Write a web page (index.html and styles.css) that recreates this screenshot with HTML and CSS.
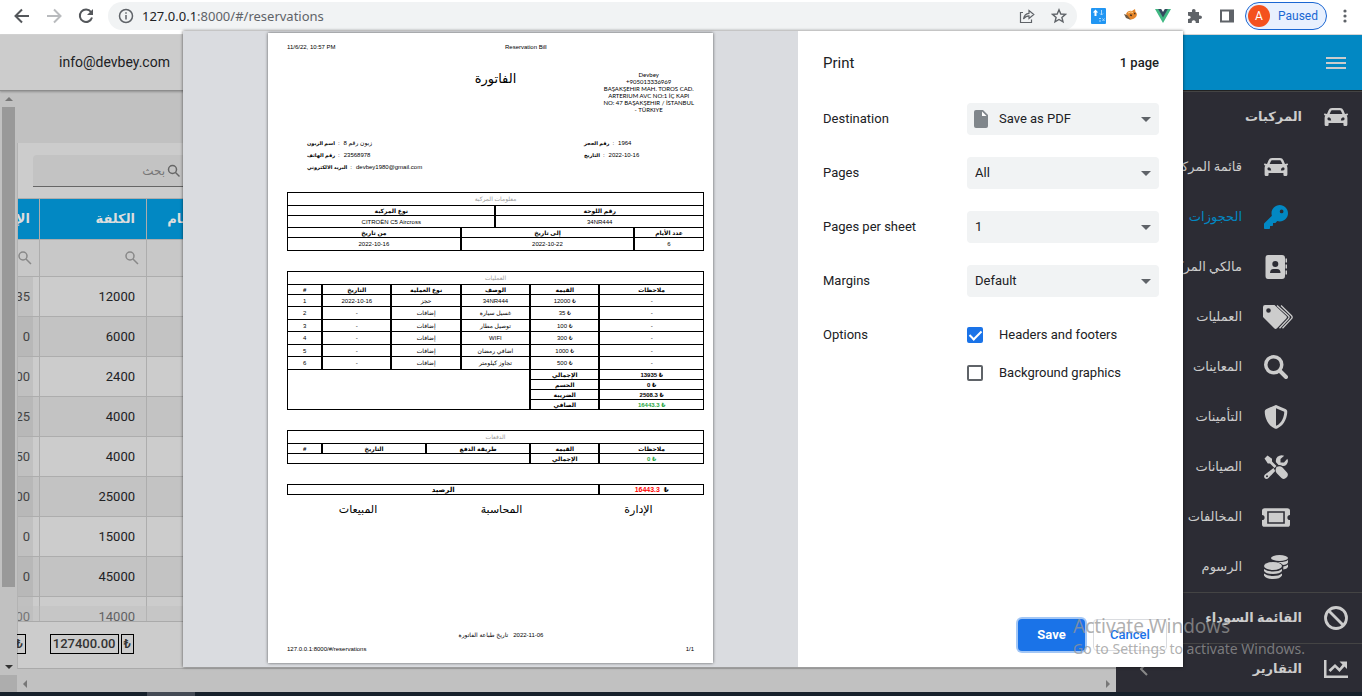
FILE: index.html
```html
<!DOCTYPE html>
<html lang="ar">
<head>
<meta charset="utf-8">
<meta name="viewport" content="width=device-width, initial-scale=1">
<title>Reservations</title>
<link rel="stylesheet" href="styles.css">
</head>
<body>
<header class="toolbar">
  <nav class="nav-buttons" aria-label="Browser">
    <button class="tool" aria-label="Back"><svg width="16" height="16" viewBox="0 0 16 16" fill="none" stroke="#54575b" stroke-width="2"><path d="M15 8H2M8 1.5L1.5 8L8 14.500"/></svg></button>
    <button class="tool" aria-label="Forward"><svg width="16" height="16" viewBox="0 0 16 16" fill="none" stroke="#b9bbbe" stroke-width="2"><path d="M1 8H14M8 1.500L14.500 8L8 14.500"/></svg></button>
    <button class="tool" aria-label="Reload"><svg width="16" height="16" viewBox="0 0 16 16"><path d="M13 4A6.200 6.200 0 1 0 14 9.500" fill="none" stroke="#54575b" stroke-width="2"/><path d="M15 1V7H9Z" fill="#54575b"/></svg></button>
  </nav>
  <div class="omnibox">
    <svg width="16" height="16" viewBox="0 0 16 16" fill="none" stroke="#5f6368" stroke-width="1.500"><circle cx="8" cy="8" r="6.500"/><path d="M8 7V11.500M8 4.200V5.800"/></svg>
    <span class="url"><span class="host">127.0.0.1</span>:8000/#/reservations</span>
    <button class="tool" aria-label="Share"><svg width="16" height="16" viewBox="0 0 16 16" fill="none" stroke="#5f6368" stroke-width="1.200"><path d="M4 4.500H1.500V14.500H12.500V11.500M4.500 11C5 7.500 7 5.500 10 5.300V2.500L14.800 6.500L10 10.500V7.900C7.500 7.900 6 9 4.500 11Z"/></svg></button>
    <button class="tool" aria-label="Bookmark"><svg width="16" height="16" viewBox="0 0 16 16" fill="none" stroke="#5f6368" stroke-width="1.400"><path d="M8 1.800L9.800 6L14.400 6.400L10.900 9.400L12 13.900L8 11.500L4 13.900L5.100 9.400L1.600 6.400L6.200 6Z"/></svg></button>
  </div>
  <div class="extensions">
    <svg width="16" height="16" viewBox="0 0 16 16"><rect width="15" height="16" rx="1" fill="#2196f3"/><path d="M3.500 8V4.500H1.800L4.500 1.500L7.200 4.500H5.500V8Z" fill="#fff"/><path d="M10.500 2V7M9 5.500L10.500 7L12 5.500M8 10.500H10M8 13H10M11.500 10.500L13.500 13M13.500 10.500L11.500 13" stroke="#a8d6fb" fill="none"/></svg>
    <svg width="16" height="16" viewBox="0 0 16 16"><path d="M3 6Q5 2 9 3L12 1L12.500 4Q15 6 13 9Q10 12.500 6 11Z" fill="#e5862b"/><path d="M1 6L4 7L8 12L3 10Z" fill="#6d5a45"/><path d="M7 7L9 7.500M11 5.500L12.500 5.500" stroke="#4b3522" stroke-width="1.500"/><path d="M5 5Q8 3 10 4.500" stroke="#ffd28b" fill="none"/></svg>
    <svg width="16" height="16" viewBox="0 0 16 16"><path d="M0 1H4L8 8L12 1H16L8 15Z" fill="#41b883"/><path d="M3.200 1H6.200L8 4L9.800 1H12.800L8 9.500Z" fill="#35495e"/></svg>
    <svg width="16" height="16" viewBox="0 0 16 16" fill="#5f6368"><path d="M1 4H5Q4.500 1 6.700 1Q9 1 8.500 4H12V7.500Q15 7 15 9.300Q15 11.500 12 11V15H8.700Q9 12.300 6.700 12.300Q4.500 12.300 4.700 15H1V11Q3.800 11 3.800 9.200Q3.800 7.500 1 7.700Z"/></svg>
    <svg width="16" height="16" viewBox="0 0 16 16"><rect x="1" y="1.500" width="14" height="13" fill="#5f6368"/><rect x="3" y="3.500" width="7" height="9" fill="#fff"/></svg>
    <button class="profile"><span class="avatar">A</span>Paused</button>
    <button class="tool" aria-label="Menu"><svg width="16" height="16" viewBox="0 0 16 16" fill="#5f6368"><circle cx="8" cy="3" r="1.600"/><circle cx="8" cy="8" r="1.600"/><circle cx="8" cy="13" r="1.600"/></svg></button>
  </div>
</header>

<div class="app">
  <main class="main">
    <div class="app-header">info@devbey.com</div>
    <div class="work">
      <div class="vscroll"><span class="arrow up"></span><span class="thumb"></span><span class="arrow down"></span></div>
      <section class="content">
        <div class="card">
          <label class="search"><input type="text" placeholder="بحث" dir="rtl" aria-label="بحث"><svg width="14" height="14" viewBox="0 0 14 14" fill="none" stroke="#666" stroke-width="1.500"><circle cx="5.500" cy="5.500" r="4"/><path d="M8.500 8.500L12.500 12.500"/></svg></label>
          <div class="grid-scroll">
            <table class="grid">
              <colgroup><col class="c-total"><col class="c-cost"><col class="c-days"><col></colgroup>
              <thead>
                <tr><th>الإجمالي</th><th>الكلفة</th><th>عدد الأيام</th><th></th></tr>
                <tr class="filters"><td><svg width="14" height="14" viewBox="0 0 14 14"><circle cx="5" cy="5" r="4"/><path d="M8 8L13 13"/></svg></td><td><svg width="14" height="14" viewBox="0 0 14 14"><circle cx="5" cy="5" r="4"/><path d="M8 8L13 13"/></svg></td><td></td><td></td></tr>
              </thead>
              <tbody>
                <tr><td>935</td><td>12000</td><td></td><td></td></tr>
                <tr><td>0</td><td>6000</td><td></td><td></td></tr>
                <tr><td>400</td><td>2400</td><td></td><td></td></tr>
                <tr><td>025</td><td>4000</td><td></td><td></td></tr>
                <tr><td>050</td><td>4000</td><td></td><td></td></tr>
                <tr><td>500</td><td>25000</td><td></td><td></td></tr>
                <tr><td>0</td><td>15000</td><td></td><td></td></tr>
                <tr><td>0</td><td>45000</td><td></td><td></td></tr>
                <tr><td>000</td><td>14000</td><td></td><td></td></tr>
              </tbody>
            </table>
            <div class="inner-scroll"></div>
          </div>
          <div class="totals"><div class="total-a"><b>₺</b></div><div class="total-b"><b>127400.00</b><b>₺</b></div></div>
        </div>
      </section>
    </div>
    <div class="hscroll"><span class="corner"></span><span class="arrow left"></span><span class="arrow right"></span></div>
  </main>

  <aside class="sidebar">
    <div class="side-top"><button class="burger" aria-label="القائمة"><svg width="20" height="14" viewBox="0 0 20 14" fill="#ccc"><path d="M0 1H20V3H0ZM0 6H20V8H0ZM0 11H20V13H0Z"/></svg></button></div>
    <nav class="side-nav" dir="rtl">
      <a class="item top" href="#"><svg class="ico" viewBox="0 0 24 18"><path fill-rule="evenodd" d="M3 6L4.600 2.200Q5.500 0 8 0H16Q18.500 0 19.400 2.200L21 6L23.300 5.600Q24 5.600 24 6.500Q24 7.300 22.700 7.500Q23.400 8.500 23.400 10V16.500Q23.400 18 22 18H20.600Q19.400 18 19.400 16.500V15H4.600V16.500Q4.600 18 3.400 18H2Q.6 18 .6 16.500V10Q.6 8.500 1.300 7.500Q0 7.300 0 6.500Q0 5.600 .7 5.600ZM5.600 6H18.400L17 2.900Q16.700 2.300 16 2.300H8Q7.300 2.300 7 2.900ZM5 9.200A1.600 1.600 0 1 0 5 12.400H7.200Q7 9.800 5 9.200ZM19 9.200A1.600 1.600 0 1 1 19 12.400H16.800Q17 9.800 19 9.200Z"/></svg><span>المركبات</span></a>
      <a class="item" href="#"><svg class="ico" viewBox="0 0 24 18"><path fill-rule="evenodd" d="M3 6L4.600 2.200Q5.500 0 8 0H16Q18.500 0 19.400 2.200L21 6L23.300 5.600Q24 5.600 24 6.500Q24 7.300 22.700 7.500Q23.400 8.500 23.400 10V16.500Q23.400 18 22 18H20.600Q19.400 18 19.400 16.500V15H4.600V16.500Q4.600 18 3.400 18H2Q.6 18 .6 16.500V10Q.6 8.500 1.300 7.500Q0 7.300 0 6.500Q0 5.600 .7 5.600ZM5.600 6H18.400L17 2.900Q16.700 2.300 16 2.300H8Q7.300 2.300 7 2.900ZM5 9.200A1.600 1.600 0 1 0 5 12.400H7.200Q7 9.800 5 9.200ZM19 9.200A1.600 1.600 0 1 1 19 12.400H16.800Q17 9.800 19 9.200Z"/></svg><span>قائمة المركبات</span></a>
      <a class="item active" href="#"><svg class="ico" viewBox="0 0 512 512"><path d="M336 352c97.200 0 176-78.800 176-176S433.200 0 336 0S160 78.800 160 176c0 18.700 2.900 36.800 8.300 53.700L7 391c-4.500 4.500-7 10.600-7 17v80c0 13.300 10.700 24 24 24h80c13.300 0 24-10.700 24-24V448h40c13.300 0 24-10.700 24-24V384h40c6.400 0 12.500-2.500 17-7l33.300-33.300c16.900 5.400 35 8.300 53.700 8.300zM376 96a40 40 0 1 1 0 80 40 40 0 1 1 0-80z"/></svg><span>الحجوزات</span></a>
      <a class="item" href="#"><svg class="ico" viewBox="0 0 24 24"><path fill-rule="evenodd" d="M4 0H18Q21 0 21 3V21Q21 24 18 24H4Q1.500 24 1.500 21V3Q1.500 0 4 0ZM11.300 6A3 3 0 1 0 11.300 12A3 3 0 1 0 11.300 6ZM6 18H16.500Q16.500 14 13 14H9.500Q6 14 6 18Z"/><path d="M21.500 3.500H23V7.500H21.500ZM21.500 9.500H23V13.500H21.500ZM21.500 15.500H23V19.500H21.500Z"/></svg><span>مالكي المركبات</span></a>
      <a class="item" href="#"><svg class="ico wide" viewBox="0 0 30 24"><path fill-rule="evenodd" d="M0 2Q0 0 2 0H11.500L23.300 11Q24.500 12.200 23.300 13.400L14 23.300Q12.500 24.500 11.200 23.300L0 12ZM5.500 3.200A2.300 2.300 0 1 0 5.500 7.800A2.300 2.300 0 1 0 5.500 3.200Z"/><path d="M14 .5L25.500 11Q26.700 12.300 25.500 13.600L16.500 23.300M18 .5L28.500 10.800Q29.800 12.200 28.500 13.600L19.500 23.300" fill="none" stroke="currentColor" stroke-width="1.300"/></svg><span>العمليات</span></a>
      <a class="item" href="#"><svg class="ico" viewBox="0 0 24 24" fill="none" stroke="currentColor"><circle cx="9.750" cy="9.750" r="8" stroke-width="3.500"/><path d="M16 16L22 22" stroke-width="4" stroke-linecap="round"/></svg><span>المعاينات</span></a>
      <a class="item" href="#"><svg class="ico" viewBox="0 0 512 512"><path d="M256 0c4.600 0 9.200 1 13.400 2.900L457.700 82.800c22 9.300 38.400 31 38.300 57.200c-.5 99.200-41.300 280.700-213.600 363.200c-16.700 8-36.100 8-52.800 0C57.300 420.700 16.500 239.200 16 140c-.1-26.200 16.300-47.900 38.300-57.200L242.700 2.900C246.800 1 251.400 0 256 0zm0 66.800V444.800C394 378 431.100 230.100 432 141.400L256 66.800z"/></svg><span>التأمينات</span></a>
      <a class="item" href="#"><svg class="ico" viewBox="0 0 24 24"><path d="M.5 3.500L3.500 .5L8 3.800V6.500L12.500 11L10.500 13L6 8.500H3.800ZM12.500 12Q16 10.500 18.500 12.500L23 17.500Q25 20 22.500 22.500Q20 25 17.500 23L13 18.500Q10.500 16 12.500 12Z"/><path fill-rule="evenodd" d="M23.300 3.800L20 7.500H16.500V4L20.200 .7Q16.500 -.8 13.500 1.800Q11.300 4 12 7.300L14.500 10Q16.500 9.500 18.500 11Q21 11.300 22.800 9.200Q24.800 6.500 23.300 3.800ZM9.500 13L1 19.500Q-.8 21.500 .8 23.200Q2.500 24.800 4.500 23L11.200 16ZM3 20.300A1 1 0 1 0 3 22.300A1 1 0 1 0 3 20.300Z"/></svg><span>الصيانات</span></a>
      <a class="item" href="#"><svg class="ico ticket" viewBox="0 0 27 18"><path fill-rule="evenodd" d="M2.500 0H24.500Q27 0 27 2.500V6.500A2.500 2.500 0 0 0 27 11.500V15.500Q27 18 24.500 18H2.500Q0 18 0 15.500V11.500A2.500 2.500 0 0 0 0 6.500V2.500Q0 0 2.500 0ZM5 3V15H22V3ZM6.500 4.500H20.500V13.500H6.500Z"/></svg><span>المخالفات</span></a>
      <a class="item" href="#"><svg class="ico" viewBox="0 0 24 24"><ellipse cx="15.500" cy="3" rx="8.500" ry="3"/><ellipse cx="9" cy="11" rx="9" ry="4"/><path d="M24 5V7.500Q23 9.500 19 10Q17 7.500 13 7Q21 7.500 24 5ZM24 9.500V12Q23 14 19.300 14.500V11.500Q22.500 11 24 9.500ZM0 14Q3 16.500 9 16.500T18 14V16Q16 19 9 19T0 16ZM0 18.500Q3 21 9 21T18 18.500V20.500Q16 24 9 24T0 20.500Z"/></svg><span>الرسوم</span></a>
      <a class="item top ruled" href="#"><svg class="ico" viewBox="0 0 24 24" fill="none" stroke="currentColor" stroke-width="2.800"><circle cx="12" cy="12" r="10.500"/><path d="M4.500 4.500L19.500 19.500"/></svg><span>القائمة السوداء</span></a>
      <a class="item top ruled" href="#"><svg class="ico" viewBox="0 0 24 18"><path d="M0 0H2.500V15.500H24V18H0ZM15.500 1.500H23V9L20.500 6.500L15.500 12L11 7.500L6.500 12L4.500 10L11 4L15.500 8.300L18.500 4.500Z"/></svg><span>التقارير</span><svg class="chev" width="8" height="14" viewBox="0 0 8 14" fill="none" stroke="#888" stroke-width="2"><path d="M7 1L1 7L7 13"/></svg></a>
    </nav>
  </aside>
</div>
<footer class="taskbar"><span class="task"></span></footer>

<div class="dialog-layer">
  <section class="dialog" role="dialog" aria-label="Print">
    <div class="preview">
      <article class="sheet">
        <div class="run-head"><span>11/6/22, 10:57 PM</span><span>Reservation Bill</span></div>
        <div class="bill-head">
          <h1>الفاتورة</h1>
          <address>Devbey<br>+905013336969<br>BAŞAKŞEHIR MAH. TOROS CAD.<br>ARTERIUM AVC NO:1 İÇ KAPI<br>NO: 47 BAŞAKŞEHIR / İSTANBUL<br>- TÜRKIYE</address>
        </div>
        <div class="facts">
          <div><p><b>اسم الزبون</b><i>:</i><bdi>زبون رقم 8</bdi></p><p><b>رقم الهاتف</b><i>:</i><bdi>23568978</bdi></p><p><b>البريد الالكتروني</b><i>:</i><bdi>devbey1980@gmail.com</bdi></p></div>
          <div><p><b>رقم الحجز</b><i>:</i><bdi>1964</bdi></p><p><b>التاريخ</b><i>:</i><bdi>2022-10-16</bdi></p></div>
        </div>
        <table class="bill">
          <colgroup><col span="12"></colgroup>
          <tr class="title"><td colspan="12">معلومات المركبة</td></tr>
          <tr class="low"><th colspan="6">نوع المركبة</th><th colspan="6">رقم اللوحة</th></tr>
          <tr><td colspan="6">CITROËN C5 Aircross</td><td colspan="6">34NR444</td></tr>
          <tr class="low"><th colspan="5">من تاريخ</th><th colspan="5">إلى تاريخ</th><th colspan="2">عدد الأيام</th></tr>
          <tr class="tall"><td colspan="5">2022-10-16</td><td colspan="5">2022-10-22</td><td colspan="2">6</td></tr>
        </table>
        <table class="bill">
          <colgroup><col span="12"></colgroup>
          <tr class="title"><td colspan="12">العمليات</td></tr>
          <tr class="low"><th>#</th><th colspan="2">التاريخ</th><th colspan="2">نوع العملية</th><th colspan="2">الوصف</th><th colspan="2">القيمة</th><th colspan="3">ملاحظات</th></tr>
          <tr><td>1</td><td colspan="2">2022-10-16</td><td colspan="2">حجز</td><td colspan="2">34NR444</td><td colspan="2">12000 ₺</td><td colspan="3">-</td></tr>
          <tr><td>2</td><td colspan="2">-</td><td colspan="2">إضافات</td><td colspan="2">غسيل سيارة</td><td colspan="2">35 ₺</td><td colspan="3">-</td></tr>
          <tr><td>3</td><td colspan="2">-</td><td colspan="2">إضافات</td><td colspan="2">توصيل مطار</td><td colspan="2">100 ₺</td><td colspan="3">-</td></tr>
          <tr><td>4</td><td colspan="2">-</td><td colspan="2">إضافات</td><td colspan="2">WIFI</td><td colspan="2">300 ₺</td><td colspan="3">-</td></tr>
          <tr><td>5</td><td colspan="2">-</td><td colspan="2">إضافات</td><td colspan="2">اضافي رمضان</td><td colspan="2">1000 ₺</td><td colspan="3">-</td></tr>
          <tr><td>6</td><td colspan="2">-</td><td colspan="2">إضافات</td><td colspan="2">تجاوز كيلومتر</td><td colspan="2">500 ₺</td><td colspan="3">-</td></tr>
          <tr class="low"><td colspan="7" rowspan="4"></td><th colspan="2">الإجمالي</th><th colspan="3">13935 ₺</th></tr>
          <tr class="low"><th colspan="2">الحسم</th><th colspan="3">0 ₺</th></tr>
          <tr class="low"><th colspan="2">الضريبة</th><th colspan="3">2508.3 ₺</th></tr>
          <tr class="low"><th colspan="2">الصافي</th><th colspan="3" class="green">16443.3 ₺</th></tr>
        </table>
        <table class="bill">
          <colgroup><col span="12"></colgroup>
          <tr class="title"><td colspan="12">الدفعات</td></tr>
          <tr class="low"><th>#</th><th colspan="3">التاريخ</th><th colspan="3">طريقة الدفع</th><th colspan="2">القيمة</th><th colspan="3">ملاحظات</th></tr>
          <tr class="low"><td colspan="7"></td><th colspan="2">الإجمالي</th><th colspan="3" class="green">0 ₺</th></tr>
        </table>
        <table class="bill balance">
          <colgroup><col span="12"></colgroup>
          <tr class="low"><th colspan="9">الرصيد</th><th colspan="3"><span class="red">16443.3</span>&nbsp; ₺</th></tr>
        </table>
        <div class="signs"><span>المبيعات</span><span>المحاسبة</span><span>الإدارة</span></div>
        <div class="printed"><bdi>تاريخ طباعة الفاتورة</bdi><bdi>2022-11-06</bdi></div>
        <div class="run-foot"><span>127.0.0.1:8000/#/reservations</span><span>1/1</span></div>
      </article>
    </div>
    <form class="options">
      <div class="opt-head"><h2>Print</h2><span>1 page</span></div>
      <div class="fields">
        <label for="dest">Destination</label>
        <div class="pick file"><svg width="14" height="18" viewBox="0 0 14 18"><path d="M2 0H9L14 5V16Q14 18 12 18H2Q0 18 0 16V2Q0 0 2 0Z" fill="#80868b"/><path d="M8 1.500V6H12.500Z" fill="#fff"/></svg><select id="dest"><option>Save as PDF</option></select></div>
        <label for="pages">Pages</label>
        <div class="pick"><select id="pages"><option>All</option></select></div>
        <label for="per">Pages per sheet</label>
        <div class="pick"><select id="per"><option>1</option></select></div>
        <label for="margins">Margins</label>
        <div class="pick"><select id="margins"><option>Default</option></select></div>
        <span>Options</span>
        <div class="checks">
          <label><input type="checkbox" checked>Headers and footers</label>
          <label><input type="checkbox">Background graphics</label>
        </div>
      </div>
      <div class="actions"><button type="button" class="btn save">Save</button><button type="button" class="btn cancel">Cancel</button></div>
    </form>
  </section>
</div>
<div class="watermark"><p class="wm-title">Activate Windows</p><p>Go to Settings to activate Windows.</p></div>
</body>
</html>
```
FILE: styles.css
```css
* { box-sizing: border-box; }
html, body { height: 100%; }
body {
  margin: 0;
  display: flex;
  flex-direction: column;
  position: relative;
  overflow: hidden;
  direction: ltr;
  background: #fff;
  font: 13px/20px Roboto, "DejaVu Sans", sans-serif;
  color: #202124;
}
button, input, select { font: inherit; color: inherit; }
button { border: 0; background: none; padding: 0; }
h1, h2, p { margin: 0; font-weight: 400; }
svg { display: block; flex: none; }

/* Browser toolbar */
.toolbar { display: flex; align-items: center; height: 34px; padding: 0 10px 2px 14px; flex: none; }
.nav-buttons { display: flex; gap: 16px; width: 94px; flex: none; }
.omnibox { flex: 1; display: flex; align-items: center; height: 28px; border-radius: 14px; background: #f1f3f4; padding: 0 10px; }
.url { flex: 1; padding-left: 8px; font: 13px/20px "Noto Sans", sans-serif; color: #5f6368; }
.host { color: #202124; }
.omnibox .tool { margin-left: 16px; }
.extensions { display: flex; align-items: center; gap: 16px; padding-left: 14px; }
.profile {
  display: flex; align-items: center; gap: 8px;
  height: 28px; margin: 0 -6px; padding: 0 8px 0 2px;
  border: 1px solid #1a66d2; border-radius: 14px;
  background: #e8f0fe; color: #1967d2; font-size: 12px;
}
.extensions > .tool:last-child { margin-right: -1px; }
.avatar { width: 22px; height: 22px; border-radius: 50%; background: #f4511e; color: #fff; line-height: 22px; }

/* Application */
.app { flex: 1; min-height: 0; display: grid; grid-template-columns: minmax(0, 1fr) 246px; border-top: 1px solid #d5d5d5; }
.main { display: flex; flex-direction: column; min-height: 0; background: #c1c1c1; }
.app-header { height: 56px; flex: none; padding: 17px 0 0 59px; background: #ccc; border-bottom: 1px solid #8d8d8d; font-size: 14px; position: relative; box-shadow: 0 1px 2px rgba(0,0,0,.25); }
.work { flex: 1; min-height: 0; display: flex; }
.vscroll { width: 17px; flex: none; display: flex; flex-direction: column; align-items: center; padding: 6px 0; background: #c1c1c1; }
.thumb { width: 13px; height: 480px; margin: 6px 0 auto; background: #999; }
.arrow { border: 4px solid transparent; width: 0; height: 0; }
.up { border-top: 0; border-bottom-color: #777; }
.down { border-bottom: 0; border-top-color: #333; }
.left { border-left: 0; border-right-color: #777; margin-left: 6px; }
.right { border-right: 0; border-left-color: #777; margin: 0 6px 0 auto; }
.hscroll { height: 17px; flex: none; display: flex; align-items: center; }
.corner { width: 17px; height: 17px; background: #adadad; }
.content { flex: 1; min-width: 0; padding: 52px 0 6px; overflow: hidden; display: flex; }
.card { flex: 1; min-width: 0; display: flex; flex-direction: column; background: #ccc; border-left: 1px solid #b3b3b3; border-bottom: 1px solid #aaa; }
.search { display: flex; align-items: center; gap: 2px; width: 160px; height: 32px; margin: 12px 15px 11px; padding-right: 12px; background: #c3c3c3; border-bottom: 1px solid #666; border-radius: 4px 4px 0 0; }
.search input { flex: 1; min-width: 0; border: 0; padding: 0; background: none; outline: 0; font-size: 12px; }
.search input::placeholder { color: #777; opacity: 1; }
.grid-scroll { flex: 1; min-height: 0; overflow: hidden; position: relative; border-bottom: 1px solid #aaa; }
.inner-scroll { position: absolute; left: 0; right: 0; bottom: 0; height: 15px; background: rgba(190,190,190,.4); }
.grid { width: 100%; table-layout: fixed; border-collapse: separate; border-spacing: 0; }
.c-total { width: 22px; }
.c-cost { width: 107px; }
.c-days { width: 92px; }
.grid th, .grid td { direction: rtl; text-align: right; white-space: nowrap; height: 40px; padding: 0 11px; border-right: 1px solid #adadad; border-bottom: 1px solid #adadad; }
.grid th { height: 42px; background: #0288c3; color: #ddd; font-size: 13px; border-top: 1px solid #adadad; }
.grid .filters td { height: 37px; padding: 0 8px; background: #c8c8c8; }
.filters svg { fill: none; stroke: #888; stroke-width: 1.500; }
.grid tbody tr:nth-child(even) { background: #c3c3c3; }
.grid tbody td:first-child { background: linear-gradient(to right, rgba(0,0,0,.06) 15px, transparent 15px); color: #444; }
.totals { display: flex; height: 46px; flex: none; padding-top: 12px; color: #333; }
.totals b { border: 1px solid #000; height: 20px; line-height: 18px; padding: 0 2px; font-weight: 500; font-size: 13px; }
.totals div { display: flex; justify-content: flex-end; gap: 2px; }
.total-a { width: 8px; }
.total-b { width: 108px; }
.grid tbody td, .grid th { padding-right: 12px; }

/* Sidebar */
.sidebar { background: #2c2c34; color: #ccc; overflow: hidden; display: flex; flex-direction: column; }
.side-top { height: 56px; flex: none; display: flex; justify-content: flex-end; align-items: center; padding-right: 16px; background: #0288c3; border-bottom: 1px solid #222; }
.side-nav { border-top: 1px solid #444; }
.item { display: flex; align-items: center; height: 50px; padding-right: 74px; color: inherit; text-decoration: none; font-size: 13px; white-space: nowrap; }
.item.top { padding-right: 14px; font-weight: 700; }
.item.ruled { border-top: 1px solid #444; height: 51px; }
.item.active { color: #0288c3; }
.ico { width: 24px; height: 24px; margin: 0 0 0 22px; fill: currentColor; }
.ico.wide { width: 30px; margin: 0 -5px 0 21px; }
.ico.ticket { width: 28px; height: 19px; margin: 0 -2px 0 20px; }
.ico[fill="none"] { fill: none; }
.chev { margin: 0 auto 0 24px; }

.taskbar { height: 4px; flex: none; background: #17212b; display: flex; }
.task { width: 48px; margin-left: 147px; background: #444a54; }

/* Print dialog floats above the dimmed application */
.dialog-layer { position: absolute; inset: 0; display: flex; justify-content: center; padding: 31px 0 29px 4px; }
.dialog { width: 1000px; display: flex; background: #fff; box-shadow: 0 0 3px rgba(0,0,0,.6); }
.preview { flex: 1; display: flex; justify-content: center; padding: 2px 0 4px; background: #dadce0; }
.sheet { width: 445px; display: flex; flex-direction: column; padding: 10px 9px 10px 19px; background: #fff; box-shadow: 0 0 3px rgba(0,0,0,.6); font: 6px/8px "Liberation Sans", "DejaVu Sans", sans-serif; color: #000; }
.run-head { display: grid; grid-template-columns: 218px 1fr; }
.bill-head { display: grid; grid-template-columns: 1fr 110px 1fr; margin-top: 20px; }
.bill-head h1 { grid-column: 2; text-align: center; font: 13px/16px "DejaVu Sans", sans-serif; }
.bill-head address { justify-self: end; padding-right: 10px; font-style: normal; text-align: center; line-height: 7px; font-family: Lato, sans-serif; }
.facts { display: grid; grid-template-columns: 277px 1fr; padding: 24px 0 19px 20px; line-height: 12px; }
.facts p { display: flex; gap: 3px; }
.facts b { font-size: 5px; }
.facts i { font-style: normal; padding-right: 1px; }
.bill { width: 100%; table-layout: fixed; border-collapse: collapse; margin-bottom: 20px; border: 1px solid #000; }
.bill td, .bill th { height: 12px; padding: 0; line-height: 8px; text-align: center; white-space: nowrap; border: solid #000; border-width: 1px 2px; }
.bill tr > :first-child { border-left-width: 1px; }
.bill tr > :last-child { border-right-width: 1px; }
.bill tr:nth-child(even) td, .bill .tall td { height: 13px; }
.bill .title td { height: 13px; color: #999; }
.bill .low th, .bill .low td { height: 10px; }
.bill .green { color: #28a745; }
.red { color: #f00; }
.balance { margin-bottom: 5px; }
.balance th { font-size: 7px; }
.signs { display: grid; grid-template-columns: 142px 145px 129px; text-align: center; font: 11px/20px "DejaVu Sans", sans-serif; }
.printed { display: flex; justify-content: center; gap: 5px; margin-top: auto; padding-left: 11px; }
.run-foot { display: flex; justify-content: space-between; padding: 6px 10px 0 0; }

.options { width: 385px; flex: none; display: flex; flex-direction: column; padding: 22px 16px 16px 25px; }
.opt-head { display: flex; justify-content: space-between; align-items: center; padding-right: 8px; font-weight: 500; }
.opt-head h2 { font-size: 15px; }
.fields { display: grid; grid-template-columns: 1fr 192px; row-gap: 22px; line-height: 32px; padding: 30px 8px 0 0; }
.pick { position: relative; display: flex; }
.pick::after { content: ""; position: absolute; right: 8px; top: 14px; border: 5px solid transparent; border-bottom: 0; border-top-color: #5f6368; pointer-events: none; }
.pick select { appearance: none; width: 100%; height: 32px; padding: 0 24px 0 8px; border: 0; border-radius: 4px; background: #f1f3f4; }
.file select { padding-left: 32px; }
.file svg { position: absolute; left: 7px; top: 7px; }
.checks { display: grid; gap: 6px; }
.checks label { display: flex; align-items: center; gap: 16px; }
.checks input { appearance: none; width: 16px; height: 16px; margin: 0; border: 2px solid #5f6368; border-radius: 2px; display: grid; place-items: center; }
.checks input:checked { background: #1a73e8; border-color: #1a73e8; }
.checks input:checked::after { content: ""; width: 5px; height: 10px; margin-top: -3px; border: solid #fff; border-width: 0 2px 2px 0; transform: rotate(45deg); }
.actions { display: flex; justify-content: flex-end; gap: 8px; margin-top: auto; }
.btn { height: 32px; flex: none; border-radius: 4px; font-weight: 500; }
.save { width: 67px; background: #1a73e8; color: #fff; font-weight: 700; box-shadow: 0 0 0 2px #a3c7f6; }
.cancel { width: 74px; border: 1px solid #dadce0; color: #1a73e8; }

/* System notice laid over everything */
.watermark { position: absolute; right: 53px; bottom: 37px; width: 236px; color: rgba(150,150,150,.75); font: 14px/20px "Noto Sans", sans-serif; white-space: nowrap; pointer-events: none; }
.wm-title { font-size: 19px; line-height: 26px; }
```
